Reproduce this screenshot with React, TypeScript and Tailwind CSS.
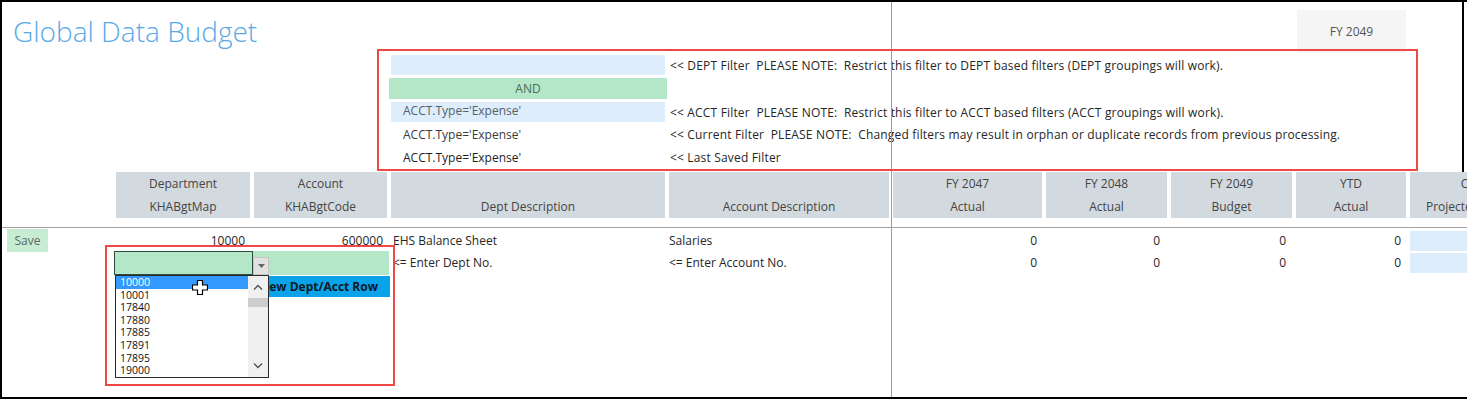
import React from "react";

// spreadsheet column widths (A..J), shared by every row
const COLS = "grid grid-cols-[112px_138px_137px_278px_224px_153px_125px_125px_114px_120px]";

const HEADERS = [
  ["Department", "KHABgtMap"],
  ["Account", "KHABgtCode"],
  ["", "Dept Description"],
  ["", "Account Description"],
  ["FY 2047", "Actual"],
  ["FY 2048", "Actual"],
  ["FY 2049", "Budget"],
  ["YTD", "Actual"],
  ["CY", "Projected Total"],
];

const DEPT_LIST = ["10000", "10001", "17840", "17880", "17885", "17891", "17895", "19000"];

function Zeros() {
  return (
    <>
      <div className="pr-[7px] text-right">0</div>
      <div className="pr-[9px] text-right">0</div>
      <div className="pr-[8px] text-right">0</div>
      <div className="pr-[7px] text-right">0</div>
    </>
  );
}

function ChevronUp() {
  return (
    <svg width="10" height="6" viewBox="0 0 10 6" fill="none" stroke="#505050" strokeWidth="1.3">
      <path d="M1 5.5L5 1.5L9 5.5" />
    </svg>
  );
}

function ChevronDown() {
  return (
    <svg width="10" height="6" viewBox="0 0 10 6" fill="none" stroke="#505050" strokeWidth="1.3">
      <path d="M1 0.5L5 4.5L9 0.5" />
    </svg>
  );
}

export default function App() {
  return (
    <div className="relative w-[1467px] h-[399px] overflow-hidden bg-white border-l-2 border-t-2 border-b-2 border-black font-['Open_Sans',sans-serif] text-[12px] text-[#262626]">
      {/* Title row */}
      <div className={`${COLS} h-[51px]`}>
        <div className="col-span-3 pl-[11px] pt-[10px] text-[28px] leading-[38px] font-light text-[#5aaae6] whitespace-nowrap">
          Global Data Budget
        </div>
        <div />
        <div />
        <div />
        <div />
        <div />
        <div className="ml-[3px] mt-[8px] w-[109px] h-[43px] bg-[#f5f5f5] flex items-center justify-center text-[#555]">
          FY 2049
        </div>
      </div>

      {/* Filter rows */}
      <div className={`${COLS} h-[23px]`}>
        <div className="col-span-3" />
        <div className="mx-[2px] mt-[2px] h-[20px] bg-[#ddedfb]" />
        <div className="col-span-5 pl-[3px] pt-[3px] leading-[20px] tracking-[0.17px] whitespace-nowrap">
          &lt;&lt; DEPT Filter&nbsp; PLEASE NOTE:&nbsp; Restrict this filter to DEPT based filters (DEPT groupings will work).
        </div>
      </div>
      <div className={`${COLS} h-[24px]`}>
        <div className="col-span-3" />
        <div className="mt-[2px] h-[21px] bg-[#b4e7c8] flex items-center justify-center text-[#4d6a58]">AND</div>
      </div>
      <div className={`${COLS} h-[24px]`}>
        <div className="col-span-3" />
        <div className="mx-[2px] mt-[2px] h-[20px] bg-[#ddedfb] pl-[12px] leading-[17px] text-[#56606a] whitespace-nowrap">
          ACCT.Type='Expense'
        </div>
        <div className="col-span-5 pl-[3px] pt-[3px] leading-[20px] tracking-[0.17px] whitespace-nowrap">
          &lt;&lt; ACCT Filter&nbsp; PLEASE NOTE:&nbsp; Restrict this filter to ACCT based filters (ACCT groupings will work).
        </div>
      </div>
      <div className={`${COLS} h-[22px] leading-[22px]`}>
        <div className="col-span-3" />
        <div className="pl-[14px] text-[#3a3a3a] whitespace-nowrap">ACCT.Type='Expense'</div>
        <div className="col-span-5 pl-[3px] tracking-[0.17px] whitespace-nowrap">
          &lt;&lt; Current Filter&nbsp; PLEASE NOTE:&nbsp; Changed filters may result in orphan or duplicate records from previous processing.
        </div>
      </div>
      <div className={`${COLS} h-[23px] leading-[23px]`}>
        <div className="col-span-3" />
        <div className="pl-[14px] text-[#1e1e1e] whitespace-nowrap">ACCT.Type='Expense'</div>
        <div className="col-span-5 pl-[3px] tracking-[0.17px] whitespace-nowrap">&lt;&lt; Last Saved Filter</div>
      </div>

      {/* Column headers */}
      <div className={`${COLS} mt-[3px] h-[46px]`}>
        <div />
        {HEADERS.map(([top, bottom], i) => (
          <div key={i} className="mx-[2px] bg-[#d3dadf] text-center leading-[23px] text-[#444] whitespace-nowrap overflow-hidden">
            <div className="h-[23px]">{top}</div>
            <div className="h-[23px]">{bottom}</div>
          </div>
        ))}
      </div>
      <div className="mt-[9px] h-px bg-[#a3a3a3]" />

      {/* Data row */}
      <div className={`${COLS} h-[23px] leading-[23px] pt-px`}>
        <div className="pl-[5px]">
          <div className="w-[41px] h-[23px] bg-[#c8ebd3] text-center text-[#5a6a60]">Save</div>
        </div>
        <div className="pr-[7px] text-right">10000</div>
        <div className="pr-[6px] text-right">600000</div>
        <div className="pl-[4px] whitespace-nowrap">EHS Balance Sheet</div>
        <div className="pl-[2px]">Salaries</div>
        <Zeros />
        <div className="ml-[2px] mt-[2px] h-[20px] bg-[#ddedfb]" />
      </div>

      {/* Entry row */}
      <div className={`${COLS} h-[24px] leading-[24px]`}>
        <div />
        <div className="col-span-2 h-[24px] bg-[#b4e7c8] flex">
          <div className="w-[139px] h-[24px] border border-[#2d4f3a]" />
          <div className="self-end w-[16px] h-[18px] bg-[#e2e2e2] border border-[#c4c4c4] flex items-center justify-center">
            <svg width="7" height="4" viewBox="0 0 7 4">
              <path d="M0 0H7L3.5 4Z" fill="#666" />
            </svg>
          </div>
        </div>
        <div className="pl-[4px] whitespace-nowrap">&lt;= Enter Dept No.</div>
        <div className="pl-[2px] whitespace-nowrap">&lt;= Enter Account No.</div>
        <Zeros />
        <div className="ml-[2px] mt-[2px] h-[20px] bg-[#ddedfb]" />
      </div>

      {/* Add row button */}
      <div className={`${COLS} h-[22px]`}>
        <div />
        <div className="col-span-2 ml-[2px] mr-[-1px] mt-px h-[21px] bg-[#0aa3ea] flex items-center justify-end pr-[12px] font-bold text-[12px] text-[#0b1a24] whitespace-nowrap">
          Add New Dept/Acct Row
        </div>
      </div>

      {/* Dropdown list (open combobox) */}
      <div className="absolute left-[113px] top-[273px] w-[154px] h-[103px] bg-white border border-[#2b2b2b] flex text-[10.5px] leading-[12.6px] text-[#111]">
        <div className="flex-1">
          {DEPT_LIST.map((v, i) => (
            <div key={v} className={i === 0 ? "pl-[4px] bg-[#3399ff] text-white" : "pl-[4px]"}>
              {v}
            </div>
          ))}
        </div>
        <div className="w-[20px] bg-[#f0f0f0] flex flex-col items-center">
          <div className="h-[22px] flex items-center justify-center">
            <ChevronUp />
          </div>
          <div className="w-full h-[9px] bg-[#cdcdcd]" />
          <div className="flex-1" />
          <div className="h-[22px] flex items-center justify-center">
            <ChevronDown />
          </div>
        </div>
      </div>

      {/* mouse cursor */}
      <svg className="absolute left-[190px] top-[278px]" width="16" height="15" viewBox="0 0 16 15">
        <path d="M5.5 0.5H10.5V5H15.5V10H10.5V14.5H5.5V10H0.5V5H5.5Z" fill="white" stroke="black" strokeWidth="1.2" />
      </svg>

      {/* freeze pane line */}
      <div className="absolute left-[889px] top-0 bottom-0 w-px bg-[#9c9c9c]" />
      {/* frame edge */}
      <div className="absolute left-[1460px] top-0 h-[170px] w-[2px] bg-black" />

      {/* red annotation boxes */}
      <div className="absolute left-[375px] top-[47px] w-[1041px] h-[122px] border-2 border-[#ef4646]" />
      <div className="absolute left-[103px] top-[243px] w-[290px] h-[141px] border-2 border-[#ef4646]" />
    </div>
  );
}
